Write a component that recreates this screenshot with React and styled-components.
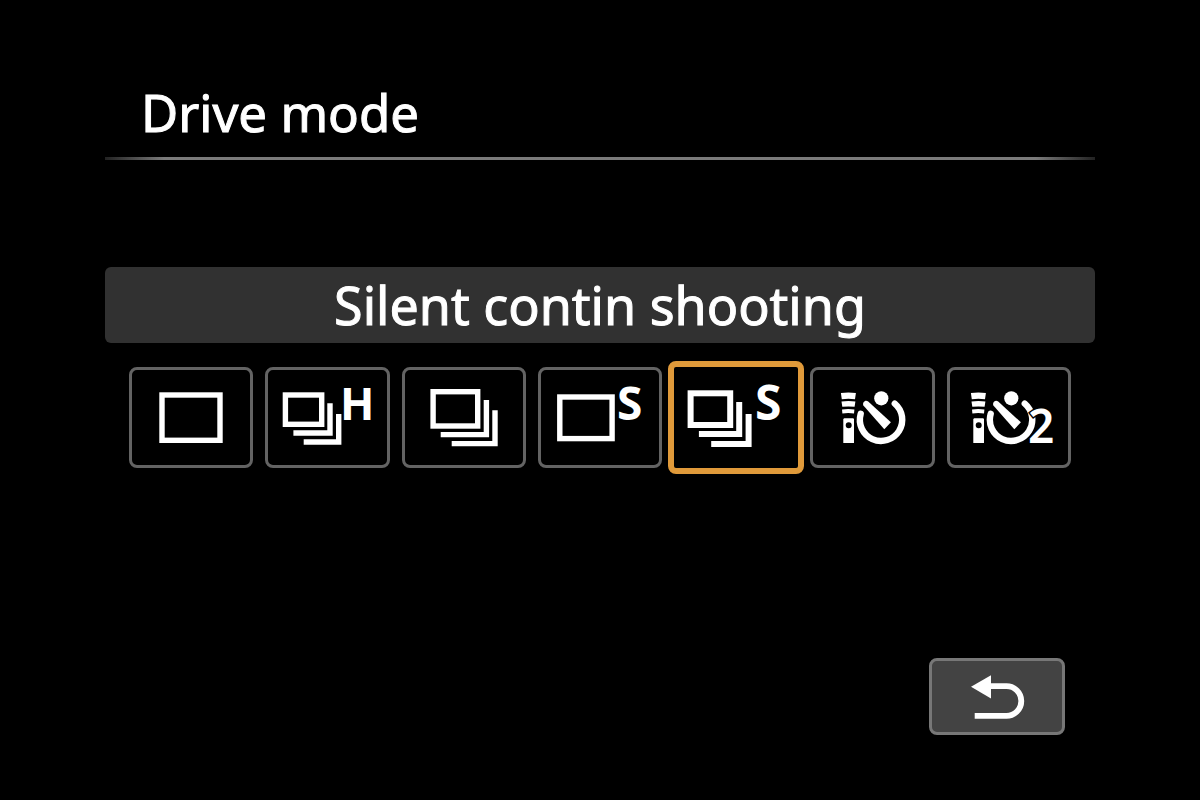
import React, { useState } from "react";
import styled, { createGlobalStyle } from "styled-components";

const GlobalStyle = createGlobalStyle`
  * {
    box-sizing: border-box;
  }

  body {
    margin: 0;
    background: #000;
    color: #fff;
    font-family: "Noto Sans", "Open Sans", sans-serif;
  }
`;

const Letter = styled.text`
  fill: #fff;
  font-family: "Noto Sans", "Open Sans", sans-serif;
  font-size: ${(props) => props.$size || 46}px;
  font-weight: 700;
`;

const Digit = styled(Letter)`
  font-weight: 600;
  stroke: #000;
  stroke-width: 3px;
  paint-order: stroke;
`;

// one frame plus the corner shaped edges of the frames behind it
const Frame = ({ x, y, w, h, stroke = 5.4 }) => (
  <rect
    x={x + stroke / 2}
    y={y + stroke / 2}
    width={w - stroke}
    height={h - stroke}
    fill="none"
    stroke="#fff"
    strokeWidth={stroke}
  />
);

const Edge = ({ x, y, right, bottom, stroke = 5.4 }) => (
  <path
    d={`M${x} ${bottom - stroke / 2}H${right - stroke / 2}V${y}`}
    fill="none"
    stroke="#fff"
    strokeWidth={stroke}
  />
);

const RemoteTimer = () => (
  <g fill="#fff">
    <path d="M29.9 26Q37.4 25.2 44.9 26L44 32.2Q37.4 31.2 30.8 32.2Z" />
    <path d="M30.5 34.4Q37.4 33.6 44.4 34.4L43.6 39.8Q37.4 39 31.3 39.8Z" />
    <path d="M31 42.4Q37.2 41.8 43.4 42.4L43 46.4Q37.2 45.8 31.4 46.4Z" />
    <path
      fillRule="evenodd"
      d="M33.3 51.2H42.2L43 52V76H32.3V52ZM37.7 55.2A3 3 0 1 0 37.7 61.2A3 3 0 1 0 37.7 55.2Z"
    />
    <circle cx="70.3" cy="31.3" r="7.1" />
    <path
      d="M83.8 36.6A21.2 21.2 0 1 1 49.7 46.8"
      fill="none"
      stroke="#fff"
      strokeWidth="6.4"
      strokeLinecap="round"
    />
    <path d="M52.4 38.6C51 35.4 54.2 32.4 57.2 34.4L79.9 55.3L73.3 62.3Z" />
  </g>
);

const modes = [
  {
    name: "Single shooting",
    icon: <Frame x={30.3} y={25.3} w={63.4} h={50.7} />,
  },
  {
    name: "High speed continuous",
    icon: (
      <>
        <Frame x={17.7} y={25.3} w={41.7} h={34.7} />
        <Edge x={28.4} y={36.3} right={67.7} bottom={68.7} />
        <Edge x={38.7} y={47} right={76.4} bottom={77.7} />
        <Letter x="75" y="53" $size={45}>H</Letter>
      </>
    ),
  },
  {
    name: "Continuous shooting",
    icon: (
      <>
        <Frame x={28.4} y={22} w={50} h={39.7} />
        <Edge x={38.7} y={33} right={87.1} bottom={70.3} />
        <Edge x={49.7} y={43.3} right={95.7} bottom={79.3} />
      </>
    ),
  },
  {
    name: "Silent single shooting",
    icon: (
      <>
        <Frame x={19.1} y={27.3} w={57.7} h={47} />
        <Letter x="79" y="53">S</Letter>
      </>
    ),
  },
  {
    name: "Silent contin shooting",
    icon: (
      <>
        <Frame x={13.6} y={23.3} w={45.6} h={37.7} stroke={6} />
        <Edge x={24.9} y={35} right={68.2} bottom={70} stroke={6} />
        <Edge x={37.2} y={47} right={77.6} bottom={80} stroke={6} />
        <Letter x="81" y="53" $size={48}>S</Letter>
      </>
    ),
  },
  { name: "Self-timer: 10 sec/remote", icon: <RemoteTimer /> },
  {
    name: "Self-timer: 2 sec/remote",
    icon: (
      <>
        <g transform="translate(-6 0)">
          <RemoteTimer />
        </g>
        <Digit x="81" y="76">2</Digit>
      </>
    ),
  },
];

export default function App() {
  const [selected, setSelected] = useState(4);

  return (
    <>
      <GlobalStyle />
      <Screen>
        <Title>Drive mode</Title>
        <Rule />
        <CurrentMode>{modes[selected].name}</CurrentMode>
        <ModeRow>
          {modes.map((mode, index) => (
            <ModeButton
              key={mode.name}
              type="button"
              aria-label={mode.name}
              aria-pressed={index === selected}
              $selected={index === selected}
              onClick={() => setSelected(index)}
            >
              <ModeIcon viewBox="3 3 118 95" aria-hidden="true">
                {mode.icon}
              </ModeIcon>
            </ModeButton>
          ))}
        </ModeRow>
        <Footer>
          <ReturnButton type="button" aria-label="Return">
            <ReturnIcon viewBox="0 0 56 48" aria-hidden="true">
              <path d="M2 13.8L22 2.2V25.5Z" fill="#fff" />
              <path
                d="M21 13.2H37.5A14.8 14.8 0 0 1 37.5 42.8H5.7"
                fill="none"
                stroke="#fff"
                strokeWidth="5.8"
              />
            </ReturnIcon>
          </ReturnButton>
        </Footer>
      </Screen>
    </>
  );
}

const Screen = styled.main`
  display: flex;
  flex-direction: column;
  min-height: 100vh;
  padding: 82px 105px 65px;
`;

const Title = styled.h1`
  margin: 0;
  padding: 0 36px 15px;
  font-size: 51px;
  font-weight: 400;
  line-height: 60px;
  -webkit-text-stroke: 1px #fff;
`;

const Rule = styled.hr`
  width: 100%;
  height: 3px;
  margin: 0;
  border: 0;
  background: linear-gradient(
    to right,
    #222,
    #7b7b7b 6%,
    #7b7b7b 94%,
    #222
  );
`;

const CurrentMode = styled.p`
  margin: 107px 0 24px;
  border-radius: 6px;
  background: #313131;
  font-size: 52px;
  line-height: 76px;
  text-align: center;
  -webkit-text-stroke: 1px #fff;
`;

const ModeRow = styled.div`
  display: grid;
  grid-template-columns: repeat(7, 1fr);
  gap: 12px;
  padding: 0 24px;
`;

const ModeButton = styled.button`
  display: flex;
  align-items: center;
  justify-content: center;
  height: ${(props) => (props.$selected ? "113px" : "101px")};
  margin: ${(props) => (props.$selected ? "-6px" : "0")};
  padding: 0;
  border: ${(props) =>
    props.$selected ? "6px solid #e09a3a" : "3px solid #636363"};
  border-radius: 8px;
  background: #000;
  cursor: pointer;
`;

const ModeIcon = styled.svg`
  flex: none;
  width: 118px;
  height: 95px;
`;

const Footer = styled.footer`
  display: flex;
  justify-content: flex-end;
  margin-top: auto;
  padding: 0 30px;
`;

const ReturnButton = styled.button`
  display: flex;
  align-items: center;
  justify-content: center;
  width: 136px;
  height: 77px;
  padding: 0;
  border: 3px solid #777;
  border-radius: 8px;
  background: #434343;
  cursor: pointer;
`;

const ReturnIcon = styled.svg`
  width: 56px;
  height: 48px;
`;
